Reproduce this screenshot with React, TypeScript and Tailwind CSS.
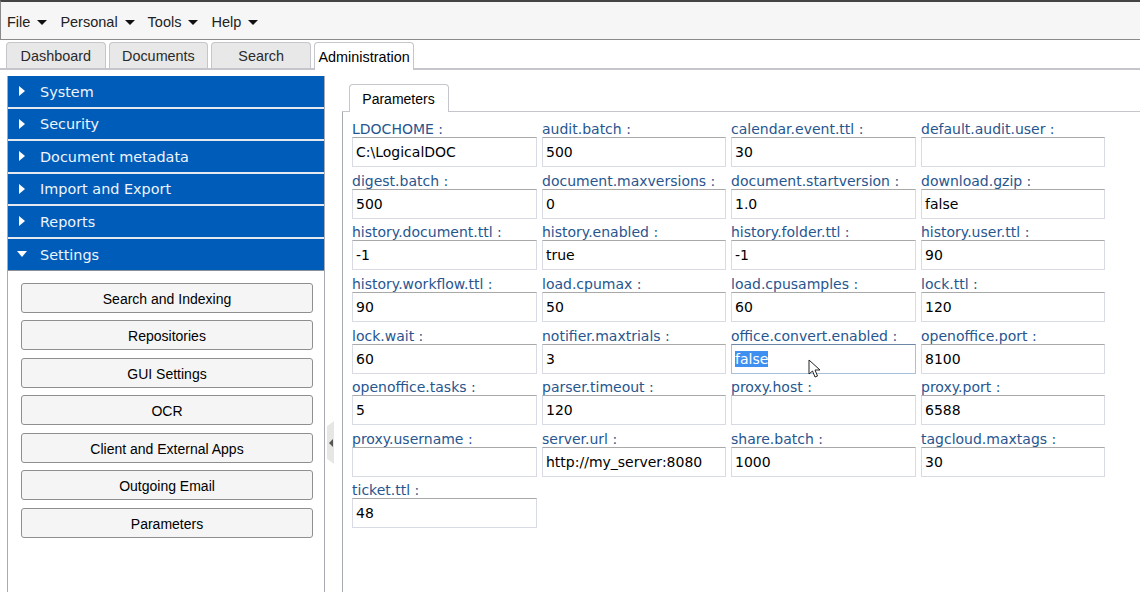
import React from "react";

const menus = ["File", "Personal", "Tools", "Help"];
const tabs = ["Dashboard", "Documents", "Search"];
const sections = ["System", "Security", "Document metadata", "Import and Export", "Reports"];
const buttons = ["Search and Indexing", "Repositories", "GUI Settings", "OCR", "Client and External Apps", "Outgoing Email", "Parameters"];
const params: [string, string][] = [
  ["LDOCHOME", "C:\\LogicalDOC"], ["audit.batch", "500"], ["calendar.event.ttl", "30"], ["default.audit.user", ""],
  ["digest.batch", "500"], ["document.maxversions", "0"], ["document.startversion", "1.0"], ["download.gzip", "false"],
  ["history.document.ttl", "-1"], ["history.enabled", "true"], ["history.folder.ttl", "-1"], ["history.user.ttl", "90"],
  ["history.workflow.ttl", "90"], ["load.cpumax", "50"], ["load.cpusamples", "60"], ["lock.ttl", "120"],
  ["lock.wait", "60"], ["notifier.maxtrials", "3"], ["office.convert.enabled", "false"], ["openoffice.port", "8100"],
  ["openoffice.tasks", "5"], ["parser.timeout", "120"], ["proxy.host", ""], ["proxy.port", "6588"],
  ["proxy.username", ""], ["server.url", "http://my_server:8080"], ["share.batch", "1000"], ["tagcloud.maxtags", "30"],
  ["ticket.ttl", "48"],
];

function Field({ label, value }: { label: string; value: string }) {
  const selected = label === "office.convert.enabled";
  return (
    <div className="flex flex-col">
      <div className="h-[17px] text-[14px] leading-[18px] text-[#27568f] whitespace-nowrap">{label} :</div>
      <div className={`h-[30px] border px-[3px] pt-[1px] flex items-center text-[14px] text-black whitespace-nowrap overflow-hidden ${selected ? "border-[#a9c0dc] border-t-[#6d87a8]" : "border-[#d8dbe3] border-t-[#a9a9a9]"}`}>
        {selected ? <span className="bg-[#3d8ff0] text-white leading-[16px]">{value}</span> : value}
      </div>
    </div>
  );
}

export default function App() {
  return (
    <div className="relative w-[1140px] h-[592px] overflow-hidden bg-white flex flex-col font-['Liberation_Sans',sans-serif] text-[14px]">
      <div className="h-[40px] shrink-0 border-t-2 border-t-[#444] border-b border-b-[#8a8a8a] border-l border-l-[#8a8a8a] bg-[#f6f6f6] flex items-center pl-[6px] gap-[13px] text-[#222] text-[14.5px]">
        {menus.map((m) => (
          <div key={m} className="flex items-center gap-[7px] mt-[4px]">
            <span>{m}</span>
            <span className="w-0 h-0 border-x-[5px] border-x-transparent border-t-[5px] border-t-[#111]" />
          </div>
        ))}
      </div>
      <div className="h-[30px] shrink-0 flex items-end pl-[6px] gap-[3.2px] border-b-2 border-b-[#c4c6cb] text-[14.4px]">
        {tabs.map((t) => (
          <div key={t} className="w-[99.5px] h-[26px] pt-[2px] bg-[#e8e8e8] border border-[#c4c6cb] border-b-0 rounded-t-[4px] flex items-center justify-center text-[#2a2a2a]">{t}</div>
        ))}
        <div className="w-[100px] h-[28px] -mb-[2px] pt-[2px] bg-white border border-[#c4c6cb] border-b-0 rounded-t-[4px] flex items-center justify-center text-black">Administration</div>
      </div>
      <div className="flex-1 flex min-h-0">
        <div className="w-[318px] ml-[7px] mt-[6px] shrink-0 border-x border-[#a9abb2] flex flex-col">
          {sections.map((s) => (
            <div key={s} className="h-[32.5px] pt-[3px] shrink-0 bg-[#005cb9] border-b-2 border-b-[#e4e8ef] flex items-center text-[#eef4fb] font-['DejaVu_Sans',sans-serif] text-[14.4px]">
              <span className="ml-[11px] mr-[15px] -mt-[3px] w-0 h-0 border-y-[5.5px] border-y-transparent border-l-[6px] border-l-white" />
              {s}
            </div>
          ))}
          <div className="h-[32px] pt-[3px] shrink-0 bg-[#005cb9] border-b border-b-[#8a9099] flex items-center text-[#eef4fb] font-['DejaVu_Sans',sans-serif] text-[14.4px]">
            <span className="ml-[9px] mr-[13px] -mt-[3px] w-0 h-0 border-x-[5.5px] border-x-transparent border-t-[6px] border-t-white" />
            Settings
          </div>
          <div className="flex flex-col gap-[7.5px] pl-[13px] pr-[11px] pt-[12px]">
            {buttons.map((b) => (
              <div key={b} className="h-[30px] pt-[3px] bg-[#f5f5f5] border border-[#8f8f8f] rounded-[3px] flex items-center justify-center text-black">{b}</div>
            ))}
          </div>
        </div>
        <div className="flex-1 flex flex-col pl-[17px] pt-[14px] min-w-0">
          <div className="h-[28px] shrink-0 flex pl-[7px] border-b border-[#c4c6cb]">
            <div className="w-[100px] h-[28px] pt-[2px] pr-[1px] bg-white border border-[#c4c6cb] border-b-0 rounded-t-[4px] flex items-center justify-center text-black">Parameters</div>
          </div>
          <div className="flex-1 border-l border-[#a9abb2] pl-[9px] pt-[8.4px] font-['DejaVu_Sans',sans-serif]">
            <div className="grid grid-cols-[185px_184px_185px_184px] gap-x-[5px] gap-y-[4.55px]">
              {params.map(([l, v]) => <Field key={l} label={l} value={v} />)}
            </div>
          </div>
        </div>
      </div>
      <div className="absolute left-[327px] top-[421px] w-[7px] h-[43px] bg-[#e6e6e6] flex items-center justify-center" style={{ clipPath: "polygon(0 12%, 100% 0, 100% 100%, 0 88%)" }}>
        <span className="w-0 h-0 border-y-[4px] border-y-transparent border-r-[4px] border-r-[#555]" />
      </div>
      <svg className="absolute left-[808px] top-[359px]" width="14" height="20" viewBox="0 0 14 20">
        <path d="M1 1 L1 15 L4.5 12 L7 18 L9.5 17 L7 11 L12 11 Z" fill="#fff" stroke="#222" strokeWidth="1" />
      </svg>
    </div>
  );
}
